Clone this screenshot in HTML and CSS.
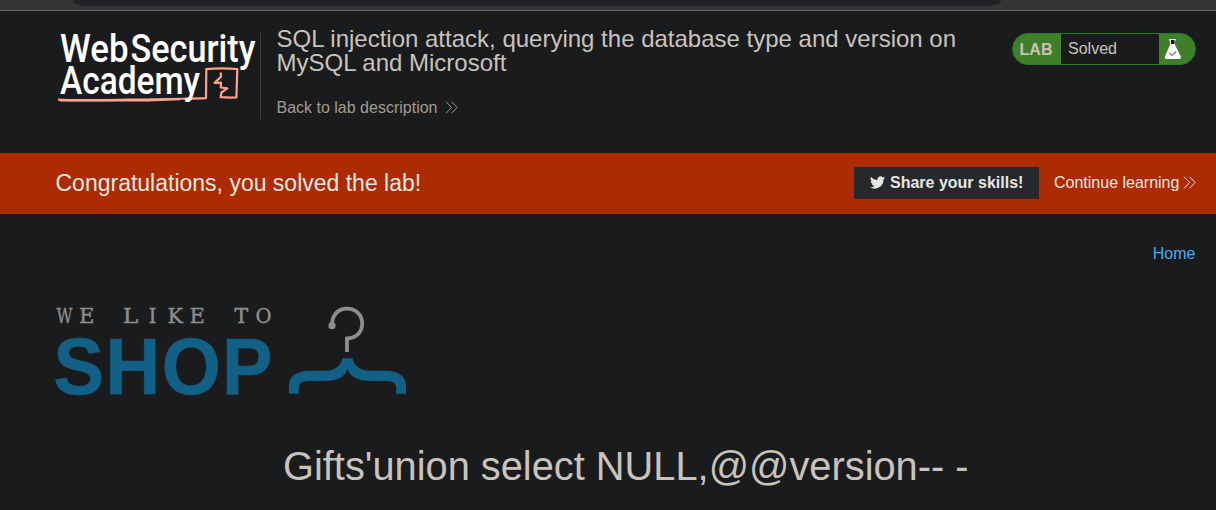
FILE: index.html
```html
<!DOCTYPE html>
<html lang="en">
<head>
<meta charset="utf-8">
<title>SQL injection attack, querying the database type and version on MySQL and Microsoft</title>
<link rel="stylesheet" href="styles.css">
</head>
<body>
<div class="browser-bar"><div class="address"></div></div>
<header class="lab-header">
  <svg class="academy-logo" width="204" height="80" viewBox="56 30 204 80">
    <g class="logo-type">
      <text x="60" y="61.7" textLength="68.5" lengthAdjust="spacingAndGlyphs">Web</text>
      <text x="130.5" y="61.7" textLength="125" lengthAdjust="spacingAndGlyphs">Security</text>
    </g>
    <g class="logo-line">
      <path d="M58 99.6C80 101 120 99.5 150 99.4C175 98.6 190 98.9 206 98.2L206.3 69.2Q220 67.8 237.3 69L236.4 97.5Q228 97.8 220.6 97.2L221.4 92.5L227.4 88.4L220.8 87.5L221 82.6L214.6 82.8L221 76.7L220.8 72.5"/>
      <path d="M60 100.3L148 100.4L180 99.2"/>
    </g>
    <g class="logo-type"><text x="60" y="94.2" textLength="140" lengthAdjust="spacingAndGlyphs">Academy</text></g>
  </svg>
  <div class="title-block">
    <h2 class="lab-title">SQL injection attack, querying the database type and version on MySQL and Microsoft</h2>
    <a class="back-link">Back to lab description
      <svg class="chevrons" width="13" height="13" viewBox="0 0 13 13"><path d="M1 .7L6.7 6.5L1 12.3M6.5 .7L12.2 6.5L6.5 12.3"/></svg>
    </a>
  </div>
  <div class="lab-status">
    <span class="lab-tag">LAB</span>
    <span class="lab-state">Solved</span>
    <span class="lab-icon">
      <svg width="18" height="22" viewBox="0 0 18 22">
        <path fill="#fff" d="M5 1H12V2.4H11V7L16.8 18.5Q17.2 21 15.5 21H2Q.3 21 .9 18.5L6 7V2.4H5Z"/>
        <path fill="#111" d="M7 2H10.5V6H7Z"/>
        <path fill="none" stroke="#777" stroke-width="1.2" d="M5.4 14.6L8 17.4L12.3 13.5"/>
      </svg>
    </span>
  </div>
</header>
<section class="solved-banner">
  <h4 class="banner-text">Congratulations, you solved the lab!</h4>
  <a class="share-button">
    <svg width="15" height="13" viewBox="0 0 24 20"><path fill="currentColor" d="M24 2.4a9.6 9.6 0 0 1-2.8.8A5 5 0 0 0 23.3.5a10 10 0 0 1-3.1 1.2 4.9 4.9 0 0 0-8.4 4.5A14 14 0 0 1 1.7 1a4.9 4.9 0 0 0 1.5 6.6A5 5 0 0 1 1 7a5 5 0 0 0 3.9 4.9 5 5 0 0 1-2.2.1 4.9 4.9 0 0 0 4.6 3.4A10 10 0 0 1 0 17.5 14 14 0 0 0 21.5 5 10 10 0 0 0 24 2.4z"/></svg>
    <span>Share your skills!</span>
  </a>
  <a class="continue-link">Continue learning
    <svg class="chevrons" width="13" height="13" viewBox="0 0 13 13"><path d="M1 .7L6.7 6.5L1 12.3M6.5 .7L12.2 6.5L6.5 12.3"/></svg>
  </a>
</section>
<main class="shop">
  <nav class="shop-nav"><a>Home</a></nav>
  <svg class="shop-logo" width="356" height="96" viewBox="54 303 356 96">
    <g class="tagline">
      <text x="56.5" y="322.5" textLength="16" lengthAdjust="spacingAndGlyphs">W</text>
      <text x="79" y="322.5" textLength="15.5" lengthAdjust="spacingAndGlyphs">E</text>
      <text x="122.8" y="322.5" textLength="15.5" lengthAdjust="spacingAndGlyphs">L</text>
      <text x="148.5" y="322.5">I</text>
      <text x="167.5" y="322.5" textLength="15.5" lengthAdjust="spacingAndGlyphs">K</text>
      <text x="189.5" y="322.5" textLength="15.5" lengthAdjust="spacingAndGlyphs">E</text>
      <text x="234.3" y="322.5" textLength="14" lengthAdjust="spacingAndGlyphs">T</text>
      <text x="255.5" y="322.5" textLength="16" lengthAdjust="spacingAndGlyphs">O</text>
    </g>
    <text class="shop-word" x="53.6" y="393.5" textLength="220.5" lengthAdjust="spacingAndGlyphs">SHOP</text>
    <path fill="none" stroke="#8d8e8f" stroke-width="3.8" d="M332 325C332 315 338 308.7 347 308.7C356 308.7 362.2 315 362.2 323.5C362.2 332 356 338.3 347 338.5V352"/>
    <circle cx="332" cy="325.7" r="3.6" fill="#8d8e8f"/>
    <path fill="#126085" d="M342.3 358.3H352.7C354 366 360 370.5 370 370.7H385C400 371 406 377 406 386V393.7H396.3V388C396 382 392 381 384 381H371C358 381 350 377 347.5 369C345 377 337 381 324 381H311C303 381 299 382 298.8 388V393.7H289V386C289 377 295 371 310 370.7H325C335 370.5 341 366 342.3 358.3Z"/>
  </svg>
  <h1 class="query">Gifts'union select NULL,@@version-- -</h1>
</main>
</body>
</html>
```
FILE: styles.css
```css
* { box-sizing: border-box; }
body {
  margin: 0;
  height: 510px;
  overflow: hidden;
  background: #1a1b1d;
  color: #c8c3bc;
  font: 16px/20px "Liberation Sans", Arial, sans-serif;
}
h1, h2, h4 { margin: 0; font-weight: 400; }
svg { display: block; flex: none; overflow: visible; }
.browser-bar {
  height: 11px;
  padding: 0 215px 0 73px;
  background: #353535;
  border-bottom: 1px solid #6a6a6a;
}
.address { height: 6px; background: #202124; border-radius: 0 0 14px 14px / 0 0 6px 6px; }
.lab-header {
  display: flex;
  align-items: flex-start;
  height: 142px;
  padding: 22px 20px 0 56px;
}
.academy-logo { margin-top: -3px; }
.logo-type { fill: #fff; font: 500 38px Roboto, sans-serif; }
.logo-line { fill: none; stroke: #ffa28b; stroke-width: 2.2; stroke-linejoin: round; }
.title-block {
  width: 720px;
  height: 86px;
  padding-left: 15.5px;
  border-left: 1px solid #3b3f41;
}
.lab-title { margin-top: -6px; font-size: 24px; line-height: 24px; }
.back-link {
  display: flex;
  align-items: center;
  gap: 8px;
  margin-top: 23px;
  color: #a39b8f;
}
.back-link .chevrons { margin-top: -1px; }
.chevrons { fill: none; stroke: currentColor; stroke-width: 1; }
.lab-status {
  display: flex;
  width: 184px;
  height: 32px;
  margin-left: auto;
  overflow: hidden;
  border: 1px solid #2b7a2b;
  border-radius: 16px;
  background: #407f2a;
  line-height: 30px;
}
.lab-tag { width: 48px; padding: 1px 0 0 6.6px; font-weight: 700; }
.lab-state { width: 98px; padding-left: 7px; background: #1a1b1d; }
.lab-icon { padding: 4px 0 0 5px; }
.solved-banner {
  display: flex;
  align-items: center;
  height: 61px;
  padding: 0 19.6px 2px 55.5px;
  background: #ac2b00;
  color: #e8e6e3;
}
.banner-text { flex: 1; font-size: 23px; line-height: 28px; }
.share-button {
  display: flex;
  align-items: center;
  gap: 5px;
  width: 185px;
  height: 32px;
  padding-left: 16px;
  background: #26292b;
  font-weight: 700;
}
.continue-link { display: flex; align-items: center; gap: 4px; margin-left: 15px; }
.shop-nav { padding: 30px 20.5px 0 0; text-align: right; color: #45abf5; }
.shop-logo { margin: 39px 0 0 54px; }
.tagline {
  fill: #8d8e8f;
  stroke: #8d8e8f;
  stroke-width: .4;
  font: 20.5px "DejaVu Serif", serif;
}
.shop-word {
  fill: #126085;
  stroke: #126085;
  stroke-width: .7;
  font: 700 80px "Liberation Sans", Arial, sans-serif;
  letter-spacing: 1.5px;
}
.query { margin: 44px 0 0 283px; font-size: 39.8px; line-height: 46px; white-space: nowrap; }
```
